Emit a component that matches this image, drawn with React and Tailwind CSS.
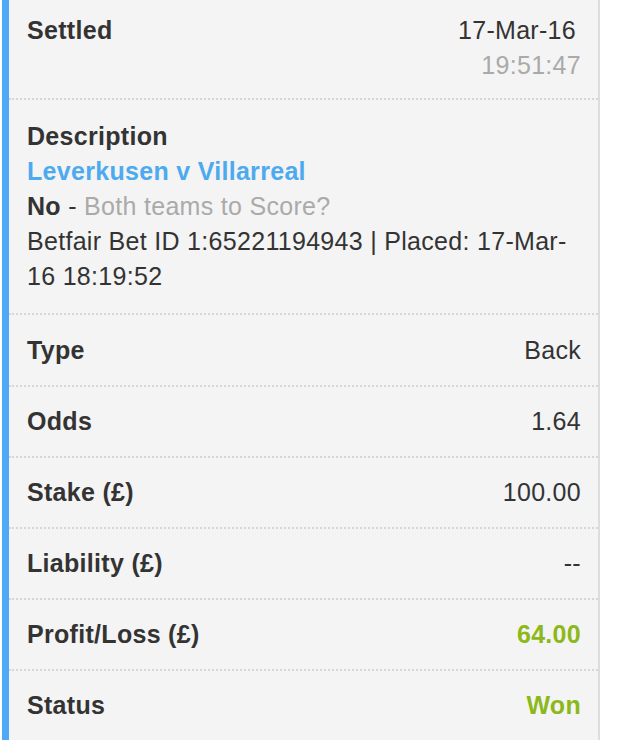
const rows = [
  { label: "Type", value: "Back", pt: "pt-[18px]" },
  { label: "Odds", value: "1.64" },
  { label: "Stake (£)", value: "100.00" },
  { label: "Liability (£)", value: "--" },
  { label: "Profit/Loss (£)", value: "64.00", green: true },
  { label: "Status", value: "Won", green: true },
];

function Row({ label, value, green, pt }) {
  return (
    <div className={`flex justify-between pl-[18px] pr-[17px] ${pt || "pt-[17px]"} pb-[17px] border-b-2 border-dotted border-[#d6d6d6]`}>
      <span className="font-bold text-[#333]">{label}</span>
      <span className={green ? "font-bold text-[#8cb819]" : "text-[#333]"}>{value}</span>
    </div>
  );
}

export default function App() {
  return (
    <div className="w-[622px] h-[740px] overflow-hidden bg-white text-[25px] leading-[35px] tracking-[0.3px] font-['Liberation_Sans',Arial,sans-serif]">
      <div className="ml-[2px] w-[598px] bg-[#f4f4f4] border-l-[7px] border-l-[#4ea9f7] border-r-2 border-r-[#dddddd]">
        <div className="flex justify-between pl-[18px] pr-[17px] pt-[13px] pb-[15px] border-b-2 border-dotted border-[#d6d6d6]">
          <span className="font-bold text-[#333]">Settled</span>
          <div className="flex flex-col items-end">
            <span className="text-[#333] mr-[5px]">17-Mar-16</span>
            <span className="text-[#aaa]">19:51:47</span>
          </div>
        </div>

        <div className="pl-[18px] pr-[17px] pt-[19px] pb-[19px] border-b-2 border-dotted border-[#d6d6d6] text-[#333]">
          <div className="font-bold">Description</div>
          <div className="font-bold text-[#4eaaee]">Leverkusen v Villarreal</div>
          <div>
            <span className="font-bold">No</span> - <span className="text-[#aaa]">Both teams to Score?</span>
          </div>
          <div>Betfair Bet ID 1:65221194943 | Placed: 17-Mar-16 18:19:52</div>
        </div>

        {rows.map((r) => (
          <Row key={r.label} {...r} />
        ))}
      </div>
    </div>
  );
}
